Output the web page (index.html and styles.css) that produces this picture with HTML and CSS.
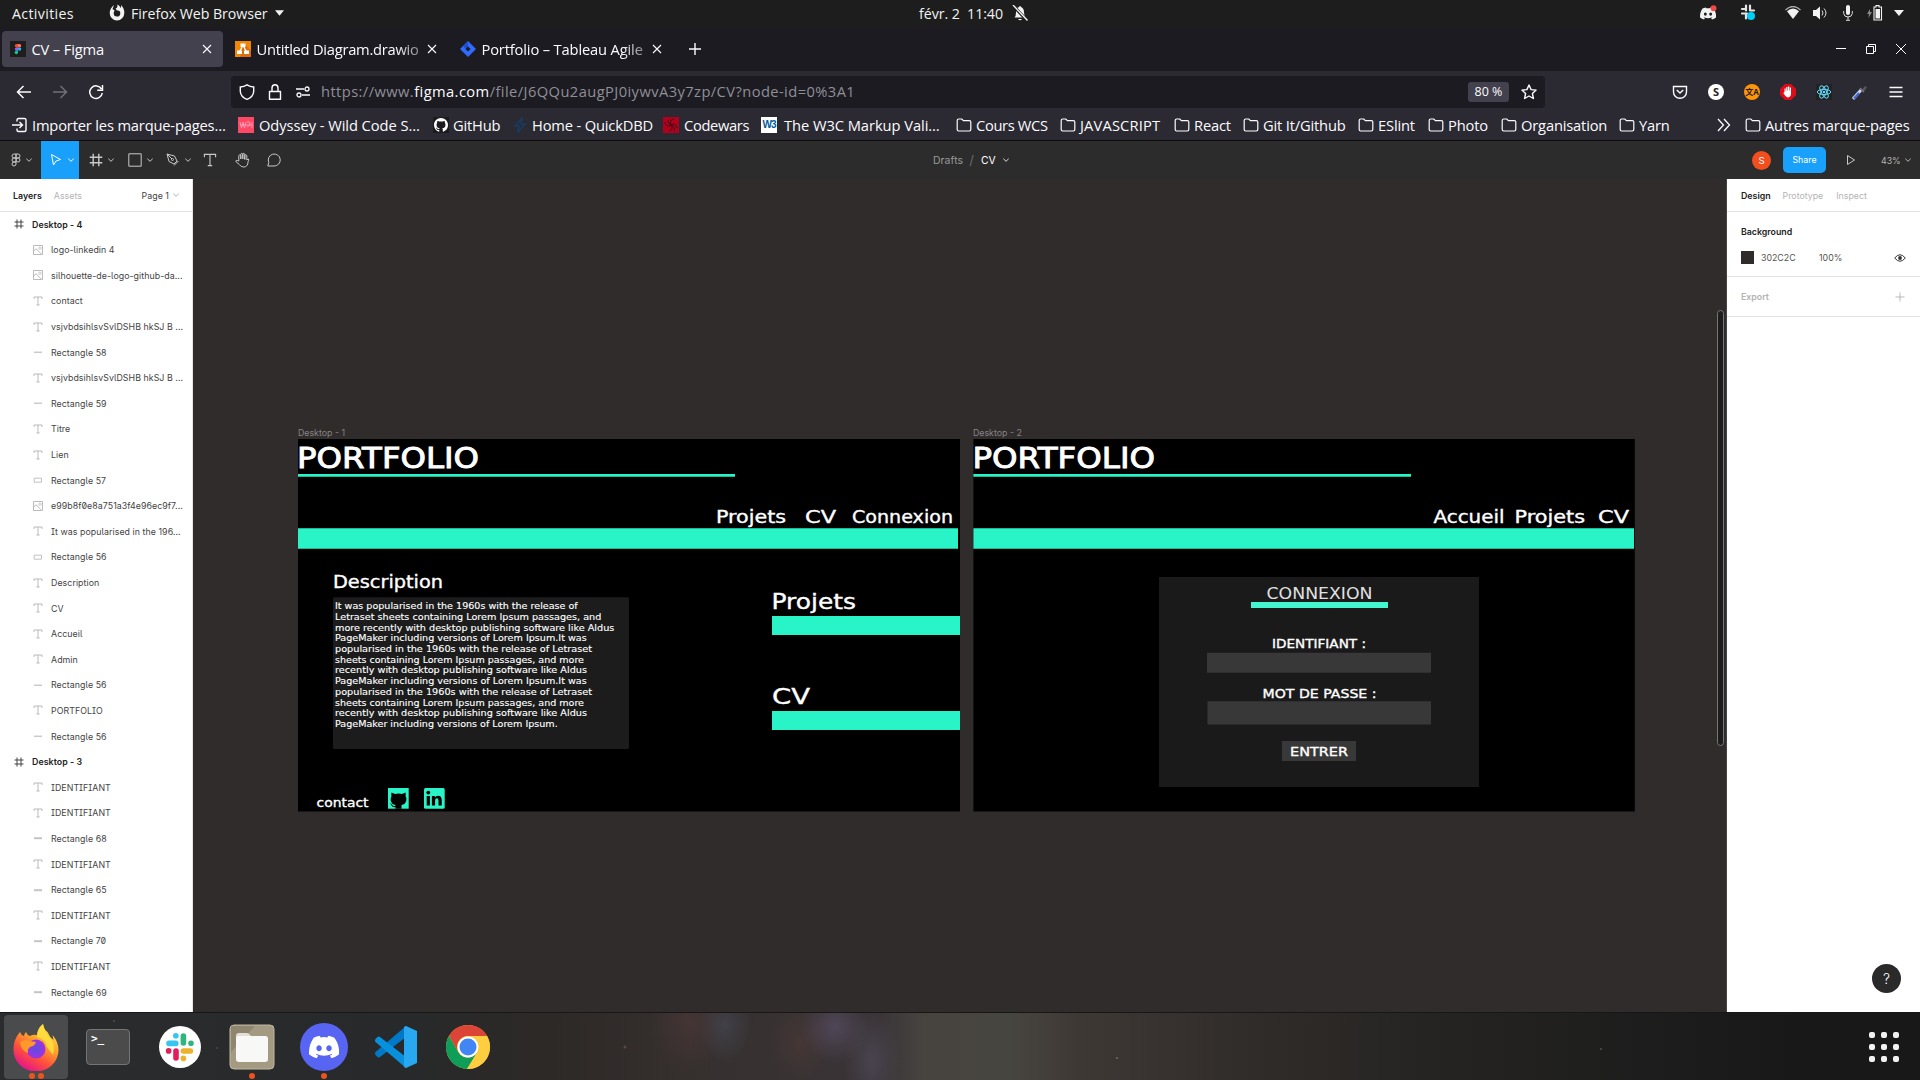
FILE: index.html
```html
<!DOCTYPE html>
<html lang="fr">
<head>
<meta charset="utf-8">
<title>CV – Figma</title>
<link rel="stylesheet" href="styles.css">
</head>
<body>
<svg class="defs" aria-hidden="true">
  <symbol id="folder" viewBox="0 0 16 16"><path d="M1.2 3.4q0-1.4 1.4-1.4h3.2l1.6 1.7h6q1.4 0 1.4 1.4v7.5q0 1.4-1.4 1.4H2.6q-1.4 0-1.4-1.4z" fill="none" stroke="#fbfbfe" stroke-width="1.2"/></symbol>
  <symbol id="x" viewBox="0 0 10 10"><path d="M1 1l8 8M9 1l-8 8" stroke="currentColor" stroke-width="1.1"/></symbol>
  <symbol id="chev" viewBox="0 0 8 8"><path d="M1.3 2.7L4 5.3l2.7-2.6" fill="none" stroke="currentColor"/></symbol>
  <symbol id="down" viewBox="0 0 10 6"><path d="M0 0h10L5 6z" fill="#f2f2f2"/></symbol>
  <symbol id="T" viewBox="0 0 10 10"><path d="M1 3V1h8v2M5 1v8M3.4 9h3.2" fill="none" stroke="currentColor" stroke-width=".8"/></symbol>
  <symbol id="frame" viewBox="0 0 10 10"><path d="M3 .5v9M7 .5v9M.5 3h9M.5 7h9" fill="none" stroke="currentColor"/></symbol>
  <symbol id="image" viewBox="0 0 10 10"><path d="M.5.5h9v9h-9zM.8 6L3 3.700l5.500 5.500" fill="none" stroke="#b3b3b3" stroke-width=".9"/><circle cx="6.900" cy="3.200" r="1.200" fill="none" stroke="#b3b3b3" stroke-width=".7"/></symbol>
  <symbol id="line" viewBox="0 0 10 10"><path d="M1 5.200h8" stroke="#b3b3b3"/></symbol>
  <symbol id="bar" viewBox="0 0 10 10"><path d="M1 5.200h8" stroke="#c4c4c4" stroke-width="2"/></symbol>
  <symbol id="rect" viewBox="0 0 10 10"><path d="M1.200 3.200h7.300v4H1.200z" fill="none" stroke="#b3b3b3" stroke-width=".8"/></symbol>
  <symbol id="gh" viewBox="0 0 16 16"><path fill-rule="evenodd" d="M8 0C3.580 0 0 3.580 0 8c0 3.540 2.290 6.530 5.470 7.590.4.070.55-.17.55-.38 0-.19-.01-.82-.01-1.490-2.010.37-2.530-.49-2.690-.94-.09-.23-.48-.94-.82-1.130-.28-.15-.68-.52-.01-.53.63-.01 1.080.58 1.230.82.72 1.210 1.870.87 2.330.66.07-.52.28-.87.51-1.070-1.780-.2-3.640-.89-3.640-3.950 0-.87.31-1.590.82-2.150-.08-.2-.36-1.020.08-2.120 0 0 .67-.21 2.200.82.64-.18 1.320-.27 2-.27s1.360.09 2 .27c1.530-1.040 2.200-.82 2.200-.82.44 1.100.16 1.920.08 2.120.51.56.82 1.270.82 2.150 0 3.070-1.870 3.750-3.650 3.950.29.25.54.73.54 1.480 0 1.070-.01 1.930-.01 2.200 0 .21.15.46.55.38A8.010 8.010 0 0 0 16 8c0-4.420-3.580-8-8-8z"/></symbol>
  <symbol id="discord" viewBox="0 0 24 18"><path fill-rule="evenodd" d="M20.300 1.500A19.800 19.800 0 0 0 15.400 0l-.7 1.300a18.300 18.300 0 0 0-5.400 0L8.600 0a19.700 19.700 0 0 0-4.900 1.500C.6 6.100-.3 10.600.1 15a19.900 19.900 0 0 0 6 3l1.300-2.100-1.900-.9.500-.4a14.200 14.200 0 0 0 12.100 0l.5.400-1.900.9L18 18a19.800 19.800 0 0 0 6-3c.5-5.200-.9-9.600-3.700-13.500zM8 12.300c-1.200 0-2.100-1.100-2.100-2.400S6.800 7.500 8 7.500s2.200 1.100 2.200 2.400-1 2.400-2.200 2.400zm8 0c-1.200 0-2.200-1.100-2.200-2.400s1-2.400 2.200-2.400 2.200 1.100 2.200 2.400-1 2.400-2.200 2.400z"/></symbol>
</svg>

<header class="topbar">
  <span class="act">Activities</span>
  <svg width="16" height="18" viewBox="0 0 16 18"><path d="M5 1q-4 3-4.300 8A7.300 7.600 0 0 0 15.300 9q0-5-3.300-8 .5 2-.2 3Q10.500 1 8.200.5q1 3-1.700 4L8 6.600q3.300-.6 3.300 2.600A3.300 3.500 0 0 1 4.700 9q0-1.500 1-2.500L3.500 5z" fill="#f2f2f2"/></svg>
  <span>Firefox Web Browser</span>
  <svg width="9" height="6"><use href="#down"/></svg>
  <span class="clock">févr. 2&nbsp; 11:40</span>
  <svg width="16" height="16" viewBox="0 0 16 16"><path d="M2.500 12.500Q4 11 4 7.500 4 3 7 2q1-2 2 0 3 1 3 5.500 0 3.500 2 5zM6 14h4q-2 2.500-4 0z" fill="#f2f2f2"/><path d="M1 .5l14 15" stroke="#1d1d1d" stroke-width="3"/><path d="M1 0l14.500 15.500" stroke="#f2f2f2" stroke-width="1.400"/></svg>
  <svg width="17" height="16" viewBox="0 0 17 16" fill="#f2f2f2"><use href="#discord" x="0" y="2" width="16" height="13"/><circle cx="13.500" cy="3.200" r="3" fill="#f04747"/></svg>
  <svg width="17" height="18" viewBox="0 0 17 18"><path d="M6 1.500v5M2 5h4M2 9.500h5M6 11v3.500M10 1.500v5M11 6.500h3" stroke="#e4e4e4" stroke-width="2.200" stroke-linecap="round"/><circle cx="11" cy="12" r="4" fill="#00d0f5"/></svg>
  <svg width="16" height="14" viewBox="0 0 16 14"><path d="M.5 4Q8-3 15.500 4" fill="none" stroke="#aaa" stroke-width="1.300"/><path d="M2 5.200Q8 0 14 5.200L8 13z" fill="#f2f2f2"/></svg>
  <svg width="16" height="14" viewBox="0 0 16 14"><path d="M0 4h3l4-3.500v13L3 10H0z" fill="#f2f2f2"/><path d="M9 4.500q2 2.500 0 5M11 2.500q4 4.500 0 9" fill="none" stroke="#ddd"/></svg>
  <svg width="10" height="16" viewBox="0 0 10 16"><rect x="3" width="4" height="10" rx="2" fill="#f2f2f2"/><path d="M.7 6v2.500q.5 3.500 4.300 3.500t4.300-3.500V6M5 12v3M3 15.300h4" fill="none" stroke="#ddd"/></svg>
  <svg width="17" height="16" viewBox="0 0 17 16"><path d="M3 4L0 9h2l-.5 4L5 7H3z" fill="#888"/><path d="M7 2h2V.6h3V2h2.500v13H7z" fill="none" stroke="#f2f2f2" stroke-width="1.100"/><path d="M8.500 4h4.500v9.500H8.500z" fill="#f2f2f2"/></svg>
  <svg width="10" height="6"><use href="#down"/></svg>
</header>

<div class="tabs">
  <div class="tab active">
    <svg width="16" height="16" viewBox="0 0 16 16"><path fill="#1e1e1e" d="M0 0h16v16H0z"/><path d="M8 3H6.500a1.700 1.700 0 0 0 0 3.400H8z" fill="#f24e1e"/><path d="M8 3h1.500a1.700 1.700 0 0 1 0 3.400H8z" fill="#ff7262"/><path d="M8 6.400H6.500a1.700 1.700 0 0 0 0 3.400H8z" fill="#a259ff"/><circle cx="9.600" cy="8.100" r="1.700" fill="#1abcfe"/><path d="M8 9.800H6.500A1.700 1.700 0 1 0 8 11.500z" fill="#0acf83"/></svg>
    <span>CV – Figma</span><svg width="10" height="10"><use href="#x"/></svg>
  </div>
  <div class="tab">
    <svg width="16" height="16" viewBox="0 0 16 16"><path fill="#f08705" d="M0 0h16v16H0z"/><path d="M9 2l7 8v6H5z" fill="#df6c0c"/><path d="M8 4L4.500 11M8 4l3.500 7" stroke="#fff" stroke-width="1.300"/><path d="M5.500 2.500h5V6h-5zM2 9.500h5V13H2zM9 9.500h5V13H9z" fill="#fff"/></svg>
    <span class="fade tight">Untitled Diagram.drawio</span><svg width="10" height="10"><use href="#x"/></svg>
  </div>
  <div class="tab">
    <svg width="16" height="16" viewBox="0 0 16 16"><path d="M8 0l8 8-8 8-8-8z" fill="#2f6bff"/><path d="M8 0v6L6 8 3 5z" fill="#1e4fd0"/><path d="M8 5.500L10.500 8 8 10.500 5.500 8z" fill="#1c1b22"/></svg>
    <span class="fade">Portfolio – Tableau Agile</span><svg width="10" height="10"><use href="#x"/></svg>
  </div>
  <svg class="plus" width="14" height="14" viewBox="0 0 14 14"><path d="M7 1v12M1 7h12" stroke="#fbfbfe" stroke-width="1.400"/></svg>
  <div class="winbtns">
    <svg width="12" height="12" viewBox="0 0 12 12"><path d="M1 5.500h10" stroke="#fff"/></svg>
    <svg width="12" height="12" viewBox="0 0 12 12"><path d="M1.500 3.500h7v7h-7zM3.500 3.500v-2h7v7h-2" fill="none" stroke="#fff"/></svg>
    <svg width="12" height="12" viewBox="0 0 12 12"><path d="M1 1l10 10M11 1L1 11" stroke="#fff"/></svg>
  </div>
</div>

<nav class="navbar">
  <svg width="16" height="16" viewBox="0 0 16 16"><path d="M15 8H2M7.500 2L1.500 8l6 6" fill="none" stroke="#fbfbfe" stroke-width="1.500"/></svg>
  <svg width="16" height="16" viewBox="0 0 16 16"><path d="M1 8h13M8.500 2l6 6-6 6" fill="none" stroke="#73727a" stroke-width="1.400"/></svg>
  <svg width="16" height="16" viewBox="0 0 16 16"><path d="M13.500 5A6.300 6.300 0 1 0 14.300 9M14.500 1v5.200H9.200" fill="none" stroke="#fbfbfe" stroke-width="1.500"/></svg>
  <div class="urlbar">
    <svg width="16" height="16" viewBox="0 0 16 16"><path d="M8 .8q3 1.800 6.700 2.200v4.500Q14.300 13 8 15.400 1.700 13 1.300 7.500V3Q5 2.600 8 .8z" fill="none" stroke="#fbfbfe" stroke-width="1.400"/></svg>
    <svg width="14" height="16" viewBox="0 0 14 16"><path d="M1.500 7.500h11v7.700h-11zM4 7V4a3 3.200 0 0 1 6 0v3" fill="none" stroke="#fbfbfe" stroke-width="1.400" stroke-linejoin="round"/></svg>
    <svg width="16" height="14" viewBox="0 0 16 14"><path d="M1 4h8M7 10h8" stroke="#fbfbfe" stroke-width="1.400"/><circle cx="12" cy="4" r="2" fill="none" stroke="#fbfbfe" stroke-width="1.300"/><circle cx="4" cy="10" r="2" fill="none" stroke="#fbfbfe" stroke-width="1.300"/></svg>
    <span class="url">https://www.<b>figma.com</b>/file/J6QQu2augPJ0iywvA3y7zp/CV?node-id=0%3A1</span>
    <span class="zoom">80 %</span>
    <svg width="16" height="16" viewBox="0 0 16 16"><path d="M8 1l2.100 4.600 5 .5-3.700 3.400 1 5L8 12l-4.400 2.500 1-5L.9 6.100l5-.5z" fill="none" stroke="#fbfbfe" stroke-width="1.400" stroke-linejoin="round"/></svg>
  </div>
  <div class="ext">
    <svg width="16" height="16" viewBox="0 0 16 16"><path d="M1.500 2.500h13V8a6.500 6.300 0 0 1-13 0z" fill="none" stroke="#fbfbfe" stroke-width="1.400"/><path d="M4.800 6L8 9l3.200-3" fill="none" stroke="#fbfbfe" stroke-width="1.500"/></svg>
    <span class="disc s">S</span>
    <span class="disc tr">文A</span>
    <svg width="16" height="16" viewBox="0 0 16 16"><path d="M5 0h6l5 5v6l-5 5H5l-5-5V5z" fill="#e00b18"/><path d="M4.500 8V4.500h1.200V7h.5V3h1.300v3.500H8V2.500h1.300v4h.5V3.500H11v7q-.8 3-3.500 3Q5.500 13 3.300 9z" fill="#fff"/></svg>
    <svg width="16" height="16" viewBox="0 0 16 16"><path fill="#222" d="M0 0h16v16H0z"/><g fill="none" stroke="#61dafb"><ellipse cx="8" cy="8" rx="6.800" ry="2.600"/><ellipse cx="8" cy="8" rx="6.800" ry="2.600" transform="rotate(60 8 8)"/><ellipse cx="8" cy="8" rx="6.800" ry="2.600" transform="rotate(120 8 8)"/></g><circle cx="8" cy="8" r="1.300" fill="#61dafb"/></svg>
    <svg width="16" height="16" viewBox="0 0 16 16"><path d="M1 15l8-9" stroke="#cdd6ee" stroke-width="3"/><path d="M2 14.500l5-5.500" stroke="#3b63d8" stroke-width="2"/><path d="M9 7l4-5 2 1.500-4 5z" fill="#55555c"/><path d="M8 4l4 4" stroke="#777" stroke-width="1.500"/></svg>
    <svg width="16" height="16" viewBox="0 0 16 16"><path d="M1.500 3.500h13M1.500 8h13M1.500 12.500h13" stroke="#fbfbfe" stroke-width="1.400"/></svg>
  </div>
</nav>

<div class="bookmarks">
  <div><svg width="16" height="16" viewBox="0 0 16 16"><path d="M5 4.500V3q0-1.500 1.500-1.500h6Q14 1.500 14 3v10q0 1.500-1.500 1.500h-6Q5 14.500 5 13v-1.500M0 8h10M7.500 5L10.500 8l-3 3" fill="none" stroke="#fbfbfe" stroke-width="1.400"/></svg><span>Importer les marque-pages…</span></div>
  <div class="wide"><svg width="16" height="16" viewBox="0 0 16 16"><path fill="#ff4766" d="M0 0h16v16H0z"/><path d="M2 5l1.500 6L5 5l1.500 6L8 5M9 5q3-1 3 1.500T9 10M14 5v6M2 8h12" fill="none" stroke="#ff9db0"/></svg><span>Odyssey - Wild Code S…</span></div>
  <div><svg width="16" height="16" viewBox="0 0 16 16"><path fill="#1b1b1f" d="M0 0h16v16H0z"/><use href="#gh" x="1" y="1" width="14" height="14" fill="#fff"/></svg><span>GitHub</span></div>
  <div><svg width="16" height="16" viewBox="0 0 16 16"><path d="M10 1L3 9h4l-1 6 7-8H9z" fill="none" stroke="#173d68" stroke-width="1.400"/></svg><span>Home - QuickDBD</span></div>
  <div class="narrow"><svg width="16" height="16" viewBox="0 0 16 16"><path fill="#b1001e" d="M0 0h16v16H0z"/><g fill="none" stroke="#3b0a14"><path d="M8 8Q6 3 11 2M8 8q5-3 6 3M8 8q3 4-2 6M8 8Q3 11 2 5M8 8Q3 5 7 2M8 8q5 2 3 6"/></g></svg><span>Codewars</span></div>
  <div class="wide"><span class="w3">W3</span><span>The W3C Markup Vali…</span></div>
  <div class="narrow"><svg width="16" height="16"><use href="#folder"/></svg><span>Cours WCS</span></div>
  <div class="caps"><svg width="16" height="16"><use href="#folder"/></svg><span>JAVASCRIPT</span></div>
  <div><svg width="16" height="16"><use href="#folder"/></svg><span>React</span></div>
  <div><svg width="16" height="16"><use href="#folder"/></svg><span>Git It/Github</span></div>
  <div><svg width="16" height="16"><use href="#folder"/></svg><span>ESlint</span></div>
  <div><svg width="16" height="16"><use href="#folder"/></svg><span>Photo</span></div>
  <div><svg width="16" height="16"><use href="#folder"/></svg><span>Organisation</span></div>
  <div><svg width="16" height="16"><use href="#folder"/></svg><span>Yarn</span></div>
  <div><svg width="14" height="14" viewBox="0 0 14 14"><path d="M1 1l5.500 6L1 13M7 1l5.500 6L7 13" fill="none" stroke="#fbfbfe" stroke-width="1.300"/></svg></div>
  <div><svg width="16" height="16"><use href="#folder"/></svg><span>Autres marque-pages</span></div>
</div>

<div class="toolbar">
  <div class="tool"><svg width="10" height="14" viewBox="0 0 10 14"><path d="M5 1H3a2 2 0 0 0 0 4h2zM5 1h2a2 2 0 0 1 0 4H5zM5 5H3a2 2 0 0 0 0 4h2zM3 9a2 2 0 1 0 2 2V9z" fill="none" stroke="currentColor"/><circle cx="7" cy="7" r="2" fill="none" stroke="currentColor"/></svg><svg width="8" height="8"><use href="#chev"/></svg></div>
  <div class="tool on"><svg width="12" height="14" viewBox="0 0 12 14"><path d="M1.500 1.500l9 5-4.500 1.500L3.500 12z" fill="none" stroke="currentColor"/></svg><svg width="8" height="8"><use href="#chev"/></svg></div>
  <div class="tool"><svg width="14" height="14"><use href="#frame"/></svg><svg width="8" height="8"><use href="#chev"/></svg></div>
  <div class="tool"><svg width="14" height="14" viewBox="0 0 14 14"><path d="M.8.8h12.400v12.400H.8z" fill="none" stroke="currentColor"/></svg><svg width="8" height="8"><use href="#chev"/></svg></div>
  <div class="tool"><svg width="14" height="14" viewBox="0 0 14 14"><path d="M1 1l7.500 2 2.500 5-3 3-5-2.500zM1 1l5 5M8 12.500l4.500-4.500" fill="none" stroke="currentColor"/><circle cx="6.500" cy="6.500" r="1" fill="none" stroke="currentColor"/></svg><svg width="8" height="8"><use href="#chev"/></svg></div>
  <div class="tool"><svg width="14" height="14"><use href="#T"/></svg></div>
  <div class="tool"><svg width="16" height="16" viewBox="0 0 16 16"><path d="M4.500 9V3.500q1-1.500 2 0V7 2q1-1.500 2 0v5-5q1-1.500 2 0v5.500V3.500q1-1.500 2 0V8l1.500-1q1 1-.2 2.500Q13.500 15 9.500 15q-3 0-4.500-2.500L1.500 9.500q0-1.500 1.500-1z" fill="none" stroke="currentColor" transform="translate(.3)"/></svg></div>
  <div class="tool"><svg width="16" height="16" viewBox="0 0 16 16"><path d="M1.800 14l1-3.500A6 6 0 1 1 8 14z" fill="none" stroke="currentColor"/></svg></div>
  <div class="crumb"><span>Drafts</span><i>/</i><b>CV</b><svg width="8" height="8"><use href="#chev"/></svg></div>
  <div class="avatar">S</div>
  <div class="share">Share</div>
  <div class="tool"><svg width="10" height="12" viewBox="0 0 10 12"><path d="M1.500 1.500L8.500 6l-7 4.500z" fill="none" stroke="currentColor"/></svg></div>
  <div class="pct">43%<svg width="8" height="8"><use href="#chev"/></svg></div>
</div>

<main class="work">
  <aside class="left">
    <div class="head"><b>Layers</b><span>Assets</span><em>Page 1</em><svg width="8" height="8"><use href="#chev"/></svg></div>
    <div class="row top"><svg><use href="#frame"/></svg>Desktop - 4</div>
    <div class="row"><svg><use href="#image"/></svg>logo-linkedin 4</div>
    <div class="row"><svg><use href="#image"/></svg>silhouette-de-logo-github-da...</div>
    <div class="row"><svg><use href="#T"/></svg>contact</div>
    <div class="row"><svg><use href="#T"/></svg>vsjvbdsihlsvSvlDSHB hkSJ B ...</div>
    <div class="row"><svg><use href="#line"/></svg>Rectangle 58</div>
    <div class="row"><svg><use href="#T"/></svg>vsjvbdsihlsvSvlDSHB hkSJ B ...</div>
    <div class="row"><svg><use href="#line"/></svg>Rectangle 59</div>
    <div class="row"><svg><use href="#T"/></svg>Titre</div>
    <div class="row"><svg><use href="#T"/></svg>Lien</div>
    <div class="row"><svg><use href="#rect"/></svg>Rectangle 57</div>
    <div class="row"><svg><use href="#image"/></svg>e99b8f0e8a751a3f4e96ec9f7...</div>
    <div class="row"><svg><use href="#T"/></svg>It was popularised in the 196...</div>
    <div class="row"><svg><use href="#rect"/></svg>Rectangle 56</div>
    <div class="row"><svg><use href="#T"/></svg>Description</div>
    <div class="row"><svg><use href="#T"/></svg>CV</div>
    <div class="row"><svg><use href="#T"/></svg>Accueil</div>
    <div class="row"><svg><use href="#T"/></svg>Admin</div>
    <div class="row"><svg><use href="#line"/></svg>Rectangle 56</div>
    <div class="row"><svg><use href="#T"/></svg>PORTFOLIO</div>
    <div class="row"><svg><use href="#line"/></svg>Rectangle 56</div>
    <div class="row top"><svg><use href="#frame"/></svg>Desktop - 3</div>
    <div class="row"><svg><use href="#T"/></svg>IDENTIFIANT</div>
    <div class="row"><svg><use href="#T"/></svg>IDENTIFIANT</div>
    <div class="row"><svg><use href="#bar"/></svg>Rectangle 68</div>
    <div class="row"><svg><use href="#T"/></svg>IDENTIFIANT</div>
    <div class="row"><svg><use href="#bar"/></svg>Rectangle 65</div>
    <div class="row"><svg><use href="#T"/></svg>IDENTIFIANT</div>
    <div class="row"><svg><use href="#bar"/></svg>Rectangle 70</div>
    <div class="row"><svg><use href="#T"/></svg>IDENTIFIANT</div>
    <div class="row"><svg><use href="#bar"/></svg>Rectangle 69</div>
  </aside>

  <section class="canvas">
    <div class="board one">
      <div class="name">Desktop - 1</div>
      <svg class="art" width="662" height="373" viewBox="298 439 662 373">
        <path d="M298 439h662v372.500H298z" fill="#000"/>
        <path d="M298 474h437v2.700H298zM298 528.300h660v20.400H298zM772 616h188v19H772zM772 711h188v19H772z" fill="#29f4c8"/>
        <g class="orb">
          <text class="f28" x="297" y="467.700" textLength="182" lengthAdjust="spacingAndGlyphs">PORTFOLIO</text>
          <text class="f17" x="716" y="523.300" textLength="70" lengthAdjust="spacingAndGlyphs">Projets</text>
          <text class="f17" x="805" y="523.300" textLength="31" lengthAdjust="spacingAndGlyphs">CV</text>
          <text class="f17" x="852" y="523.300" textLength="101" lengthAdjust="spacingAndGlyphs">Connexion</text>
          <text class="f17" x="333" y="588" textLength="110" lengthAdjust="spacingAndGlyphs">Description</text>
          <text class="f21" x="771.500" y="609.300" textLength="84.500" lengthAdjust="spacingAndGlyphs">Projets</text>
          <text class="f21" x="772" y="704" textLength="38" lengthAdjust="spacingAndGlyphs">CV</text>
          <text class="f13" x="316.500" y="807" textLength="52" lengthAdjust="spacingAndGlyphs">contact</text>
        </g>
        <rect x="333" y="597.300" width="296" height="151.700" rx="1.500" fill="#1c1c1c"/>
        <g class="orb f9">
          <text x="335" y="609.200" textLength="242.700" lengthAdjust="spacingAndGlyphs">It was popularised in the 1960s with the release of</text>
          <text x="335" y="619.900" textLength="266.300" lengthAdjust="spacingAndGlyphs">Letraset sheets containing Lorem Ipsum passages, and</text>
          <text x="335" y="630.600" textLength="279.300" lengthAdjust="spacingAndGlyphs">more recently with desktop publishing software like Aldus</text>
          <text x="335" y="641.300" textLength="251.700" lengthAdjust="spacingAndGlyphs">PageMaker including versions of Lorem Ipsum.It was</text>
          <text x="335" y="652" textLength="257" lengthAdjust="spacingAndGlyphs">popularised in the 1960s with the release of Letraset</text>
          <text x="335" y="662.700" textLength="249" lengthAdjust="spacingAndGlyphs">sheets containing Lorem Ipsum passages, and more</text>
          <text x="335" y="673.400" textLength="252" lengthAdjust="spacingAndGlyphs">recently with desktop publishing software like Aldus</text>
          <text x="335" y="684.100" textLength="251.700" lengthAdjust="spacingAndGlyphs">PageMaker including versions of Lorem Ipsum.It was</text>
          <text x="335" y="694.800" textLength="257" lengthAdjust="spacingAndGlyphs">popularised in the 1960s with the release of Letraset</text>
          <text x="335" y="705.500" textLength="249" lengthAdjust="spacingAndGlyphs">sheets containing Lorem Ipsum passages, and more</text>
          <text x="335" y="716.200" textLength="252" lengthAdjust="spacingAndGlyphs">recently with desktop publishing software like Aldus</text>
          <text x="335" y="726.900" textLength="222.700" lengthAdjust="spacingAndGlyphs">PageMaker including versions of Lorem Ipsum.</text>
        </g>
        <rect x="388" y="788" width="20.700" height="20.700" fill="#29f4c8"/>
        <path d="M391.500 792.500l3.500 1.500q3.500-1 7 0l3.500-1.500q.5 2 0 3.500 1.500 2 .8 4.500-1 4-4.800 4.500v3.700h-6V807q-3.500.7-4.500-2.500l-1.200-1q2-.2 3 2 1.500 1 2.700 0v-.5q-3.800-.5-4.800-4.500-.3-2.500.8-4.500-.5-1.500 0-3.500z" fill="#000"/>
        <rect x="424" y="788" width="20.700" height="20.700" rx="1.500" fill="#29f4c8"/>
        <g fill="#000"><circle cx="428.300" cy="792.600" r="1.900"/><path d="M426.700 796h3.200v9.500h-3.200zM431.900 796h3v1.400q1-1.700 3.200-1.700 3.600 0 3.600 4.300v5.500h-3.200v-5q0-2.200-1.600-2.200-1.800 0-1.800 2.200v5h-3.200z"/></g>
      </svg>
    </div>
    <div class="board two">
      <div class="name">Desktop - 2</div>
      <svg class="art" width="662" height="373" viewBox="973 439 662 373">
        <path d="M973.400 439h661.400v372.500H973.400z" fill="#000"/>
        <path d="M973.400 474H1411v2.700H973.400zM973.400 528.300H1634v20.400H973.400z" fill="#29f4c8"/>
        <path d="M1159 577h320v210h-320z" fill="#1a1a1a"/>
        <path d="M1251 602h137v6h-137z" fill="#43f6cf"/>
        <path d="M1207 652.700h224v20h-224zM1207.500 701.300H1431v23.300h-223.500zM1282 741h74v20h-74z" fill="#383838"/>
        <g class="orb">
          <text class="f28" x="972.500" y="467.700" textLength="182.500" lengthAdjust="spacingAndGlyphs">PORTFOLIO</text>
          <text class="f17" x="1433.500" y="523.300" textLength="71" lengthAdjust="spacingAndGlyphs">Accueil</text>
          <text class="f17" x="1514.500" y="523.300" textLength="70.500" lengthAdjust="spacingAndGlyphs">Projets</text>
          <text class="f17" x="1598" y="523.300" textLength="31" lengthAdjust="spacingAndGlyphs">CV</text>
          <text class="f15 thin" x="1266.500" y="599" textLength="106" lengthAdjust="spacingAndGlyphs">CONNEXION</text>
          <text class="f12" x="1272" y="648.300" textLength="94" lengthAdjust="spacingAndGlyphs">IDENTIFIANT :</text>
          <text class="f12" x="1262.500" y="698.300" textLength="114" lengthAdjust="spacingAndGlyphs">MOT DE PASSE :</text>
          <text class="f12" x="1290" y="755.800" textLength="58" lengthAdjust="spacingAndGlyphs">ENTRER</text>
        </g>
      </svg>
    </div>
    <div class="scroll"></div>
  </section>

  <aside class="right">
    <div class="head"><b>Design</b><span>Prototype</span><span>Inspect</span></div>
    <div class="bg">
      <b>Background</b>
      <div class="fill"><i></i><span>302C2C</span><span>100%</span><svg width="12" height="10" viewBox="0 0 12 10"><path d="M.7 5Q6-1.500 11.300 5 6 11.500.7 5z" fill="none" stroke="#333"/><circle cx="6" cy="5" r="1.900" fill="#333"/></svg></div>
    </div>
    <div class="export"><b>Export</b><svg width="10" height="10" viewBox="0 0 10 10"><path d="M5 .5v9M.5 5h9" stroke="#aaa" stroke-width=".8"/></svg></div>
    <div class="help">?</div>
  </aside>
</main>

<footer class="dock">
  <div class="app sel">
    <svg width="48" height="48" viewBox="0 0 48 48"><defs><linearGradient id="ff" x1=".9" y1="0" x2=".3" y2="1"><stop offset="0" stop-color="#fff44f"/><stop offset=".4" stop-color="#ffa52a"/><stop offset=".7" stop-color="#ff4f3c"/><stop offset="1" stop-color="#e3128e"/></linearGradient><radialGradient id="fp"><stop offset="0" stop-color="#5b4de0"/><stop offset="1" stop-color="#a033e0"/></radialGradient></defs>
      <path d="M31 1q-6 5-6 11-4-1-7 1-3-1-4-4-2 2-2 4-3-1-4-4Q1 17 1.500 27A22.500 21.500 0 0 0 46.500 27q0-8-6-15l1 5q-4-3-6-8-4-3-4.500-8z" fill="url(#ff)"/><path d="M31 1q-6 5-6 13 8 2 10 10l6 8q3-10-3-17-5-5-7-14z" fill="#ffe040" opacity=".85"/><circle cx="24" cy="26" r="9.500" fill="url(#fp)"/><path d="M8 19q5-3 9-1l7 1q-1 4-6 5-3 2-2 6-7-2-8-11z" fill="#ff9a2a"/></svg>
    <p><i></i><i></i></p>
  </div>
  <div class="app"><div class="term">&gt;_</div></div>
  <div class="app"><svg width="42" height="42" viewBox="0 0 42 42"><circle cx="21" cy="21" r="21" fill="#fff"/><g stroke-width="5.600" stroke-linecap="round"><path d="M10 17.400h6.800M16.800 9.800h.1" stroke="#36c5f0"/><path d="M24.400 10v7M32 17.200v.1" stroke="#2eb67d"/><path d="M24.400 25h7M24.400 32.300v.1" stroke="#ecb22e"/><path d="M17 25v7M9.600 24.900h.1" stroke="#e01e5a"/></g></svg></div>
  <div class="app"><svg width="46" height="46" viewBox="0 0 46 46"><rect x="1" y="1" width="44" height="44" rx="4" fill="#a49a82" stroke="#c0b79f"/><path d="M2 2h24L2 28z" fill="#8f866f"/><path d="M7 12q0-3 3-3h8q2 0 4 3h13q4 0 4 4v18q0 3-3 3H10q-3 0-3-3z" fill="#e4e0d6"/><rect x="7" y="12" width="32" height="26" rx="3" fill="#f8f8f7"/></svg><p><i></i></p></div>
  <div class="app"><svg width="48" height="48" viewBox="0 0 48 48"><circle cx="24" cy="24" r="24" fill="#5865f2"/><use href="#discord" x="9" y="12.500" width="30" height="23" fill="#fff"/></svg><p><i></i></p></div>
  <div class="app"><svg width="42" height="42" viewBox="0 0 42 42"><path d="M31 0v11L5 31q-1.500 1-3-.5L.5 29q-1-1.500 0-3z" fill="#0078c8"/><path d="M31 42V31L5 11q-1.500-1-3 .5L.5 13q-1 1.500 0 3z" fill="#0990dd"/><path d="M31 0l11 5v32l-11 5q-2 0-2-2V2q0-2 2-2z" fill="#29a8f2"/></svg></div>
  <div class="app"><svg width="46" height="46" viewBox="0 0 46 46"><circle cx="23" cy="23" r="22" fill="#ffcd40"/><path d="M3.900 12A22 22 0 0 1 42.100 12H23a11 11 0 0 0-9.500 16.500z" fill="#dc4437"/><path d="M3.900 12A22 22 0 0 0 22 45l10-16.500a11 11 0 0 1-18.500 0z" fill="#109d58"/><path d="M42.100 12H23l9.500 16.500L22 45A22 22 0 0 0 42.100 12z" fill="#ffcd40"/><circle cx="23" cy="23" r="10.500" fill="#fff"/><circle cx="23" cy="23" r="8.500" fill="#4285f4"/></svg></div>
  <div class="grid"><i></i><i></i><i></i><i></i><i></i><i></i><i></i><i></i><i></i></div>
</footer>
</body>
</html>
```
FILE: styles.css
```css
* { box-sizing: border-box; }
html, body { margin: 0; height: 1080px; overflow: hidden; }
body { width: 1920px; background: #1c1b22; font-family: "Open Sans", "Noto Sans", sans-serif; font-size: 14.7px; color: #fbfbfe; white-space: nowrap; }
svg { display: block; flex: none; }
.defs { position: absolute; width: 0; height: 0; }

.topbar { height: 27px; background: #1d1d1d; display: grid; align-items: center; color: #f2f2f2; font-size: 14.2px; letter-spacing: -.05px; padding: 0 0 1px 12px; grid-template-columns: 97px 22px 144px 644px 93px 688px 40px 45px 28px 30px 24px 27px 12px; }
.act { letter-spacing: .35px; }

.tabs { height: 44px; display: flex; align-items: center; padding-left: 2px; background: #1c1b22; }
.tab { width: 221px; height: 36px; margin-right: 4px; padding: 0 11px 0 8px; border-radius: 4px; display: flex; align-items: center; }
.tab span { flex: 1; margin: 0 4px 0 5.500px; letter-spacing: -.15px; }
.tab .tight { letter-spacing: -.25px; }
.active { background: #42414d; }
.fade { -webkit-mask-image: linear-gradient(90deg, #000 84%, #0006 99%); mask-image: linear-gradient(90deg, #000 84%, #0006 99%); }
.plus { margin-left: 11px; }
.winbtns { margin-left: auto; padding-right: 13px; display: flex; gap: 18px; }

.navbar { height: 41px; background: #2b2a33; display: flex; align-items: center; padding-left: 16px; gap: 20px; }
.urlbar { width: 1314px; height: 32px; margin-left: 107px; border-radius: 4px; background: #1c1b22; display: flex; align-items: center; padding: 0 8px; }
.urlbar svg { margin-right: 13px; }
.urlbar svg:last-child { margin: 0 0 0 12px; }
.url { flex: 1; color: #8f8f96; letter-spacing: .42px; margin: 0 0 2px -3px; }
.url b { color: #fbfbfe; font-weight: 400; }
.zoom { width: 41px; height: 20px; border-radius: 3px; background: #42414d; font-size: 12.500px; line-height: 20px; text-align: center; }
.ext { margin-left: 107px; display: flex; gap: 20px; align-items: center; }
.disc { width: 16px; height: 16px; border-radius: 8px; font: bold 11px/16px "Open Sans", sans-serif; text-align: center; color: #222; }
.s { background: #fff; }
.tr { background: #ff9408; font: bold 8px/16px "Noto Sans", "Noto Sans CJK SC", sans-serif; }

.bookmarks { height: 29px; background: #2b2a33; border-bottom: 1px solid #0c0c0d; padding: 0 0 2px 12px; display: grid; grid-template-columns: 226px 195px 79px 151px 98px 195px 104px 114px 69px 115px 70px 73px 118px 98px 28px 170px; letter-spacing: -.17px; }
.bookmarks div { display: flex; align-items: center; gap: 4px; }
.bookmarks div:nth-child(2), .bookmarks div:nth-child(5) { gap: 5px; }
.bookmarks .wide { letter-spacing: -.06px; }
.bookmarks .narrow { letter-spacing: -.35px; }
.bookmarks .caps { letter-spacing: .15px; }
.bookmarks .w3 { width: 16px; height: 16px; margin-right: 3px; background: #fff; color: #005a9c; font: bold 10px/16px "Liberation Sans", sans-serif; text-align: center; letter-spacing: -1px; }

.toolbar { height: 38px; background: #2c2c2c; color: #c8c8c8; display: grid; grid-template-columns: 41px 38px 43px 38px 38px 23px 41px 23px 1465px 29px 55px 33px 1fr; align-items: center; font: 9.600px Inter, sans-serif; }
.tool { display: flex; height: 38px; align-items: center; justify-content: center; gap: 5px; }
.tool:nth-child(1) { padding-left: 2px; gap: 4px; }
.tool:nth-child(2) { padding-left: 5px; gap: 5px; }
.tool:nth-child(3) { padding-left: 3px; gap: 4px; }
.tool:nth-child(4) { padding-right: 1px; gap: 4px; }
.tool:nth-child(5) { gap: 4px; }
.on { background: #18a0fb; color: #fff; }
.crumb { display: flex; align-items: center; padding-left: 648px; gap: 6px; color: #9a9a9a; font-size: 10.400px; letter-spacing: .1px; }
.crumb i { font-size: 13px; color: #6b6b6b; font-style: normal; }
.crumb b { color: #fff; font-weight: 400; margin-left: 1px; }
.crumb svg { color: #ddd; }
.avatar { width: 19px; height: 19px; margin-left: 2px; border-radius: 50%; background: #f24e1e; color: #fff; line-height: 19px; text-align: center; }
.share { width: 43px; height: 26px; margin-left: 4px; border-radius: 5px; background: #18a0fb; color: #fff; font-size: 8.800px; line-height: 26px; text-align: center; }
.pct { display: flex; align-items: center; gap: 3px; padding-left: 14px; font-size: 8.800px; color: #b5b5b5; }

.work { height: 833px; display: grid; grid-template-columns: 193px 1534px 193px; font: 8.800px Inter, sans-serif; color: #444; }
.left { background: #fff; border-right: 1px solid #e5e5e5; overflow: hidden; font-feature-settings: "ss02", "zero", "cv05", "cv08"; letter-spacing: .06px; }
.head { height: 33px; border-bottom: 1px solid #e2e2e2; display: flex; align-items: center; padding-left: 13px; color: #b3b3b3; }
.head b { color: #222; font-weight: 600; margin-right: 12px; }
.head span { margin-right: 13px; }
.left .head { padding-right: 12px; }
.head em { margin: 0 3px 0 auto; font-style: normal; color: #444; }
.row { height: 25.600px; display: flex; align-items: center; padding: 0 0 1.200px 33px; gap: 8px; color: #444; }
.row svg { width: 10px; height: 10px; color: #aaa; }
.top { padding-left: 14px; font-weight: 600; color: #222; }
.top svg { color: #444; }

.canvas { background: #302c2c; position: relative; border-right: 1px solid #444; }
.board { position: absolute; top: 247px; }
.one { left: 105px; }
.two { left: 780px; }
.name { height: 13px; line-height: 13px; color: #868383; }
.orb { fill: #fff; font-family: "DejaVu Sans", sans-serif; stroke: #fff; stroke-width: .35px; }
.f28 { font-size: 27.800px; stroke-width: .9px; }
.f21 { font-size: 20.800px; }
.f17 { font-size: 16.800px; }
.f15 { font-size: 15.200px; }
.f13 { font-size: 13px; }
.f12 { font-size: 12.200px; }
.f9 { font-size: 8.600px; stroke-width: .12px; }
.thin { fill: #e0e0e0; stroke: none; }
.scroll { position: absolute; right: 2px; top: 131px; width: 7px; height: 436px; border: 1px solid #777; border-radius: 4px; background: #1e1c1c; }

.right { background: #fff; display: flex; flex-direction: column; }
.right b { font-weight: 600; color: #222; }
.right .head { padding-left: 14px; }
.bg { height: 65px; padding: 13px 14px 0; border-bottom: 1px solid #e2e2e2; line-height: 13px; }
.fill { display: grid; grid-template-columns: 20px 58px 75px 12px; height: 13px; align-items: center; margin-top: 13px; color: #555; }
.fill i { width: 13px; height: 13px; background: #302c2c; }
.export { height: 40px; padding: 0 15px 0 14px; border-bottom: 1px solid #e2e2e2; display: flex; align-items: center; justify-content: space-between; }
.right .export b { color: #b3b3b3; }
.help { width: 29px; height: 29px; margin: auto 19px 19px auto; border-radius: 15px; background: #2a2a2a; color: #fff; font-size: 14px; font-weight: 300; line-height: 29px; text-align: center; }

.dock { height: 68px; border-top: 1px solid #171717; display: flex; align-items: center; padding-left: 4px; background:
  radial-gradient(circle 1.500px at 114px 8px, #55607a, transparent),
  radial-gradient(circle 1.500px at 217px 35px, #4a5470, transparent),
  radial-gradient(circle 2px at 625px 34px, #7a4f45, transparent),
  radial-gradient(circle 1.500px at 1117px 45px, #8d7f74, transparent),
  radial-gradient(circle 1.500px at 1601px 36px, #666, transparent),
  radial-gradient(ellipse 26px 38px at 725px 12px, #4a506080, transparent),
  radial-gradient(ellipse 34px 36px at 835px 14px, #5a4f66b0, transparent),
  radial-gradient(ellipse 28px 50px at 872px 48px, #4f4b5ab0, transparent),
  radial-gradient(ellipse 30px 40px at 800px 30px, #4e3a3690, transparent),
  radial-gradient(ellipse 40px 50px at 690px 10px, #443534, transparent),
  linear-gradient(90deg, #2a2c2d 0, #27292a 400px, #2d2927 550px, #352f2e 680px, #3a3437 880px, #474440 925px, #474540 1010px, #3e3835 1080px, #302c29 1250px, #242322 1450px, #181818 1800px); }
.app { width: 64px; height: 64px; margin-right: 8px; border-radius: 4px; display: flex; align-items: center; justify-content: center; position: relative; }
.sel { background: #4a4b4c; }
.app p { position: absolute; left: 0; right: 0; bottom: 0; margin: 0; display: flex; gap: 3px; justify-content: center; }
.app p i { width: 6px; height: 6px; border-radius: 3px; background: #e95420; }
.term { width: 44px; height: 36px; border: 1px solid #757575; border-radius: 4px; background: #4b4b4b; color: #fff; font: bold 11px/14px "DejaVu Sans Mono", monospace; padding: 2px 4px; }
.grid { margin: 0 19px 0 auto; width: 32px; display: grid; grid-template-columns: repeat(3, 6px); gap: 6px; }
.grid i { width: 6px; height: 6px; border-radius: 2px; background: #f2f2f2; }
```
